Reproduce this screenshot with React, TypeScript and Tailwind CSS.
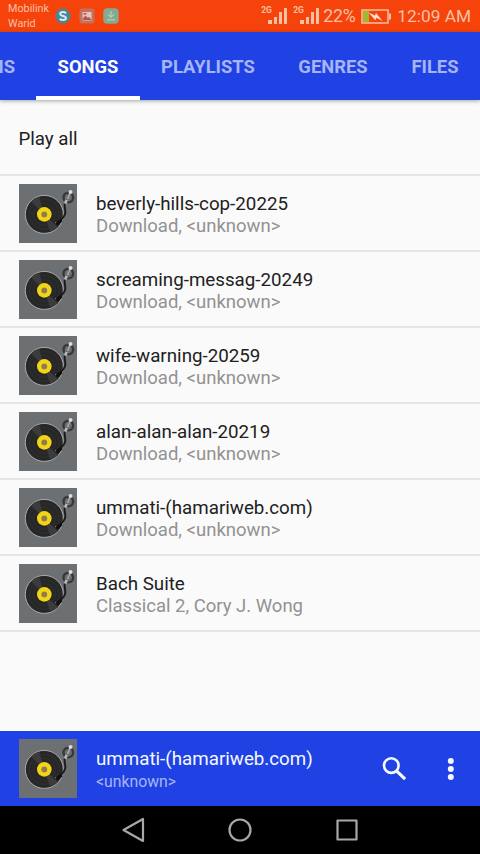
const songs = [
  { title: "beverly-hills-cop-20225", detail: "Download, <unknown>" },
  { title: "screaming-messag-20249", detail: "Download, <unknown>" },
  { title: "wife-warning-20259", detail: "Download, <unknown>" },
  { title: "alan-alan-alan-20219", detail: "Download, <unknown>" },
  { title: "ummati-(hamariweb.com)", detail: "Download, <unknown>" },
  { title: "Bach Suite", detail: "Classical 2, Cory J. Wong" },
];

function Turntable() {
  return (
    <svg className="h-[59px] w-[58px] shrink-0" viewBox="0 0 58 59" aria-hidden="true">
      <rect width="58" height="59" fill="#6d7072" />
      <circle cx="25.3" cy="30.4" r="19" fill="#272727" stroke="#b4b4b4" strokeWidth="0.9" />
      <path d="M25.3 30.4 12 17.5a19 19 0 0 1 8-5z" fill="#3c3c3c" />
      <path d="M25.3 30.4 39 43.2a19 19 0 0 1-8 4z" fill="#3c3c3c" />
      <circle cx="25.3" cy="30.4" r="15" fill="none" stroke="#383838" strokeWidth="0.5" />
      <circle cx="25.3" cy="30.4" r="11" fill="none" stroke="#383838" strokeWidth="0.5" />
      <circle cx="25.3" cy="30.4" r="7.3" fill="#f2d516" />
      <circle cx="25.3" cy="30.4" r="2.9" fill="#93794e" />
      <circle cx="49.3" cy="13.6" r="4.8" fill="#6d7072" stroke="#36393b" strokeWidth="2.4" />
      <path d="M48.5 15 51.5 8.5" stroke="#a9acae" strokeWidth="1.6" />
      <circle cx="51.5" cy="8" r="2" fill="#d8dadb" />
      <path d="M47.6 16 46 20" stroke="#b5b7b8" strokeWidth="2.8" />
      <path d="M45.7 19.5c-.8 3 1 6 .6 9.5-.3 3-3 5.5-5.3 8" fill="none" stroke="#191919" strokeWidth="1.9" />
      <path d="m42.6 36-5.3 4.3" stroke="#111" strokeWidth="3.4" />
      <circle cx="36.6" cy="38.6" r="0.7" fill="#888" />
    </svg>
  );
}

function Signal() {
  return (
    <div className="flex h-[18px] w-[26px] shrink-0">
      <span className="text-[8.5px] leading-[9px] font-bold tracking-[-0.2px]">2G</span>
      <svg className="-ml-[4px] h-[18px] w-[20px] shrink-0" viewBox="0 0 20 18" fill="currentColor" aria-hidden="true">
        <path d="M0 14h4v4H0zM6 11h3v7H6zM11 6h3v12h-3zM16 2h3v16h-3z" />
      </svg>
    </div>
  );
}

function StatusBar() {
  return (
    <div className="flex h-8 shrink-0 items-center bg-[#f5430b] text-[#fbc0a4]">
      <div className="w-[55px] shrink-0 pl-2 pt-px text-[10.8px] leading-[14.5px]">
        <div>Mobilink</div>
        <div>Warid</div>
      </div>
      <div className="flex items-center gap-[8px]">
        <svg className="h-4 w-4" viewBox="0 0 16 16" aria-hidden="true">
          <circle cx="8" cy="8" r="7.4" fill="#43889b" />
          <path d="M11 5.2Q9.8 4 8 4 5.2 4 5.2 5.8 5.2 7.4 8 7.9q3 .6 3 2.2Q11 12 8 12q-2 0-3.2-1.3" fill="none" stroke="#dcebee" strokeWidth="2" />
        </svg>
        <svg className="h-4 w-4" viewBox="0 0 16 16" aria-hidden="true">
          <rect x="0.5" y="0.5" width="15" height="15" rx="3" fill="#c4705c" />
          <path d="M3.5 4h9v8.5h-9z" fill="#e9c2b8" />
          <path d="m3.8 10.5 2.7-3 2.2 2.2 1.3-.7 2 2v1H3.8zM4.5 5h3v1.5h-3z" fill="#a95b50" />
        </svg>
        <svg className="h-4 w-4" viewBox="0 0 16 16" aria-hidden="true">
          <rect x="0.3" y="0.3" width="15.4" height="15.4" rx="4" fill="#82ab92" />
          <path d="M8 3v5.5M5 6.5 8 9.2l3-2.7M4 11.8h8" fill="none" stroke="#b4cdb8" strokeWidth="1.2" />
        </svg>
      </div>
      <div className="ml-auto flex items-center pr-[9px]">
        <div className="-mt-[3px] flex gap-[6px]">
          <Signal />
          <Signal />
        </div>
        <span className="ml-[4px] w-[38px] text-[17.8px] leading-8 tracking-[-0.3px]">22%</span>
        <svg className="h-[15px] w-[30px]" viewBox="0 0 30 15" aria-hidden="true">
          <path d="M1 1h26v13H1z" fill="none" stroke="#fbc0a4" strokeWidth="1.5" />
          <path d="M28 4.5h2v6h-2z" fill="#fbc0a4" />
          <path d="M2 2h6v11H2z" fill="#a3b82d" />
          <path d="m7.5 3.5 6.5 3L15 4l6.5 8-6-3.2-1.2 2.5z" fill="#fde0d2" />
        </svg>
        <span className="ml-[6px] text-[17.3px] leading-8 whitespace-nowrap">12:09 AM</span>
      </div>
    </div>
  );
}

function Tabs() {
  return (
    <div className="relative z-10 flex h-[68px] shrink-0 bg-[#2042e4] text-[18.4px] font-bold text-[#a6b5f5] shadow-[0_1px_4px_rgba(0,0,0,0.35)]">
      <div className="flex w-9 shrink-0 items-center justify-end overflow-hidden pr-[21px] pt-[2px]">ALBUMS</div>
      <div className="flex w-[104px] shrink-0 items-center justify-center border-b-4 border-white pt-[6px] text-white">SONGS</div>
      <div className="flex w-[136px] shrink-0 items-center justify-center pt-[2px]">PLAYLISTS</div>
      <div className="flex w-[114px] shrink-0 items-center justify-center pt-[2px]">GENRES</div>
      <div className="flex w-[90px] shrink-0 items-center justify-center pt-[2px]">FILES</div>
    </div>
  );
}

export default function App() {
  return (
    <div className="flex h-[854px] w-[480px] flex-col overflow-hidden bg-[#fafafa] font-['Roboto','Liberation_Sans',sans-serif]">
      <StatusBar />
      <Tabs />

      {/* Song list */}
      <div className="flex-1">
        <div className="flex h-[76px] items-center border-b-2 border-[#e4e4e4] pl-[18.5px] pt-[4px] text-[18.7px] text-[#212121]">
          Play all
        </div>
        {songs.map((song) => (
          <div key={song.title} className="flex h-[76px] items-center gap-[19px] border-b-2 border-[#e4e4e4] pl-[19px]">
            <Turntable />
            <div className="pt-[3px] leading-[22px]">
              <div className="text-[18.75px] text-[#212121]">{song.title}</div>
              <div className="text-[18.5px] text-[#929292]">{song.detail}</div>
            </div>
          </div>
        ))}
      </div>

      {/* Now playing */}
      <div className="flex h-[75px] shrink-0 items-center bg-[#2042e4] pl-[19px]">
        <Turntable />
        <div className="ml-[19px] w-[286px] pt-[2px]">
          <div className="text-[18.75px] leading-[24px] text-[#f4f8ff]">ummati-(hamariweb.com)</div>
          <div className="text-[15.8px] leading-[22px] text-[#a6b5f5]">{"<unknown>"}</div>
        </div>
        <svg className="h-[24px] w-[25px]" viewBox="0 0 25 24" fill="none" stroke="#f4f8ff" strokeWidth="2.6" aria-hidden="true">
          <circle cx="9.3" cy="8.6" r="7.3" />
          <path d="m14.5 13.8 8.6 8.3" strokeWidth="3.2" />
        </svg>
        <svg className="ml-[40px] h-[24px] w-[8px]" viewBox="0 0 8 24" fill="#f4f8ff" aria-hidden="true">
          <circle cx="3.8" cy="4" r="3" />
          <circle cx="3.8" cy="12" r="3" />
          <circle cx="3.8" cy="20" r="3" />
        </svg>
      </div>

      {/* System navigation */}
      <div className="flex h-12 shrink-0 items-center bg-black pl-[121px]">
        <svg className="h-[26px] w-[24px]" viewBox="0 0 24 26" fill="none" stroke="#a8a8a8" strokeWidth="2.2" strokeLinejoin="round" aria-hidden="true">
          <path d="M22 2v22L2.5 13z" />
        </svg>
        <svg className="ml-[83px] h-6 w-6" viewBox="0 0 24 24" fill="none" stroke="#a8a8a8" strokeWidth="2.2" aria-hidden="true">
          <circle cx="12" cy="12" r="10.5" />
        </svg>
        <svg className="ml-[84px] h-[22px] w-[22px]" viewBox="0 0 22 22" fill="none" stroke="#a8a8a8" strokeWidth="2.2" strokeLinejoin="round" aria-hidden="true">
          <path d="M1.5 1.5h19v19h-19z" />
        </svg>
      </div>
    </div>
  );
}
